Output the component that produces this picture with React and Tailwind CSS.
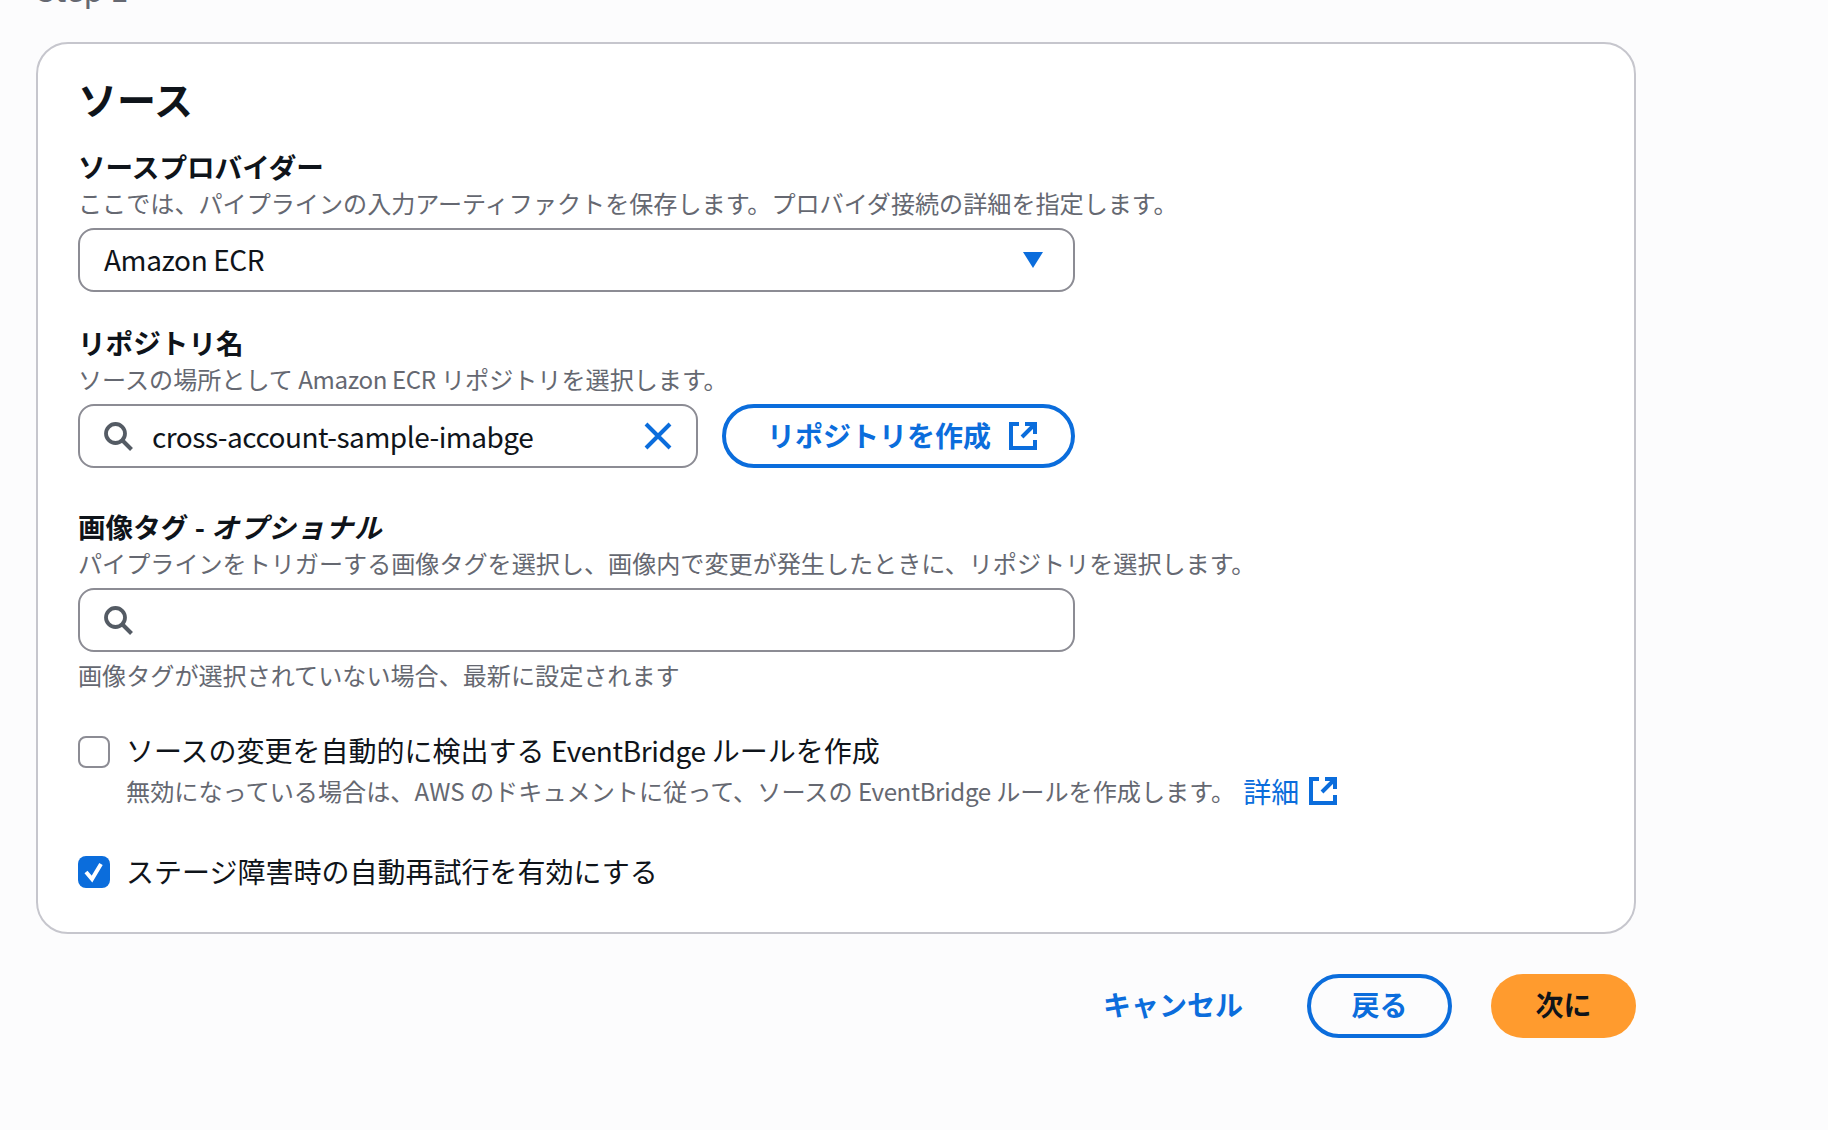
import React from "react";

const FONT = "font-['Noto_Sans_CJK_JP','Noto_Sans',sans-serif]";

function SearchIcon() {
  return (
    <svg width="32" height="32" viewBox="0 0 32 32" fill="none" className="shrink-0">
      <circle cx="13.5" cy="13.5" r="9.5" stroke="#545b64" strokeWidth="3.8" />
      <path d="M20.5 20.5 L29.5 29.5" stroke="#545b64" strokeWidth="4" />
    </svg>
  );
}

function ExternalIcon() {
  return (
    <svg width="28" height="28" viewBox="0 0 28 28" fill="none" className="shrink-0">
      <path d="M10 2 H2 V26 H26 V18" stroke="#0b6ddc" strokeWidth="4" />
      <path d="M16 2 H26 V12 M26 2 L13 15" stroke="#0b6ddc" strokeWidth="4" />
    </svg>
  );
}

function Label({ children }) {
  return <div className="text-[27.6px] leading-[37px] font-bold text-[#0f141a]">{children}</div>;
}

function Desc({ children }) {
  return <div className="text-[24.1px] leading-[36px] text-[#656871] whitespace-nowrap">{children}</div>;
}

export default function App() {
  return (
    <div className={`${FONT} w-[1828px] h-[1130px] overflow-hidden bg-[#fcfcfd] pl-[36px]`}>
      <div className="h-[42px] -mt-[28px] text-[32px] leading-[32px] text-[#656871]">Step 1</div>
      <div className="w-[1600px] h-[892px] mt-[28px] bg-white border-2 border-[#c6c6cd] rounded-[32px] pl-[40px] pt-[28px]">
        <h2 className="text-[39px] leading-[52px] font-bold text-[#0f141a]">ソース</h2>
        <div className="mt-[24px]">
          <Label>ソースプロバイダー</Label>
          <Desc>ここでは、パイプラインの入力アーティファクトを保存します。プロバイダ接続の詳細を指定します。</Desc>
        </div>
        <div className="mt-[7px] w-[997px] h-[64px] border-2 border-[#8c8c94] rounded-[16px] flex items-center justify-between pl-[24px] pr-[29px]">
          <span className="text-[28px] tracking-[-0.4px] text-[#0f141a] pb-[2px]">Amazon ECR</span>
          <svg width="22" height="18" viewBox="0 0 22 18"><path d="M1 1 H21 L11 17 Z" fill="#0b6ddc" /></svg>
        </div>

        <div className="mt-[32px]">
          <Label>リポジトリ名</Label>
          <Desc>ソースの場所として <span className="tracking-[-0.4px]">Amazon ECR</span> リポジトリを選択します。</Desc>
        </div>
        <div className="mt-[7px] flex gap-[24px] w-[997px]">
          <div className="w-[620px] h-[64px] border-2 border-[#8c8c94] rounded-[16px] flex items-center pl-[22px] pr-[23px]">
            <SearchIcon />
            <span className="ml-[18px] text-[28px] tracking-[-0.5px] text-[#0f141a] flex-1">cross-account-sample-imabge</span>
            <svg width="30" height="30" viewBox="0 0 30 30" fill="none"><path d="M3 3 L27 27 M27 3 L3 27" stroke="#0b6ddc" strokeWidth="4" /></svg>
          </div>
          <div className="w-[353px] h-[64px] border-4 border-[#0b6ddc] rounded-full flex items-center justify-center gap-[18px] pl-[7px]">
            <span className="text-[28px] font-bold text-[#0b6ddc] pb-[2px]">リポジトリを作成</span>
            <ExternalIcon />
          </div>
        </div>

        <div className="mt-[40px]">
          <Label>画像タグ - <em className="tracking-[1px]">オプショナル</em></Label>
          <Desc>パイプラインをトリガーする画像タグを選択し、画像内で変更が発生したときに、リポジトリを選択します。</Desc>
        </div>
        <div className="mt-[7px] w-[997px] h-[64px] border-2 border-[#8c8c94] rounded-[16px] flex items-center pl-[22px]">
          <SearchIcon />
        </div>
        <Desc><span className="block mt-[5px]">画像タグが選択されていない場合、最新に設定されます</span></Desc>

        <div className="mt-[35px] flex gap-[16px]">
          <div className="mt-[8px] w-[32px] h-[32px] border-2 border-[#8c8c94] rounded-[8px] bg-white shrink-0" />
          <div>
            <div className="text-[28px] leading-[45px] text-[#0f141a]">ソースの変更を自動的に検出する <span className="tracking-[-0.4px]">EventBridge</span> ルールを作成</div>
            <div className="flex items-center whitespace-nowrap">
              <span className="text-[24.15px] leading-[36px] text-[#656871]">無効になっている場合は、AWS のドキュメントに従って、ソースの <span className="tracking-[-0.4px]">EventBridge</span> ルールを作成します。</span>
              <span className="ml-[8px] text-[28px] leading-[36px] text-[#0b6ddc]">詳細</span>
              <span className="ml-[10px]"><ExternalIcon /></span>
            </div>
          </div>
        </div>

        <div className="mt-[40px] flex gap-[16px] items-center">
          <div className="w-[32px] h-[32px] rounded-[8px] bg-[#0b6ddc] flex items-center justify-center shrink-0">
            <svg width="24" height="24" viewBox="0 0 24 24" fill="none"><path d="M4 12 L10 19 L19 4" stroke="#fff" strokeWidth="4" /></svg>
          </div>
          <span className="text-[28px] leading-[44px] text-[#0f141a] pb-[2px]">ステージ障害時の自動再試行を有効にする</span>
        </div>
      </div>

      <div className="w-[1600px] mt-[40px] flex items-center justify-end">
        <span className="text-[28px] font-bold text-[#0b6ddc] mr-[64px] pb-[4px]">キャンセル</span>
        <div className="w-[145px] h-[64px] border-4 border-[#0b6ddc] rounded-full flex items-center justify-center text-[28px] font-bold text-[#0b6ddc] pb-[4px]">戻る</div>
        <div className="ml-[39px] w-[145px] h-[64px] bg-[#ff9b2e] rounded-full flex items-center justify-center text-[28px] font-bold text-[#0f141a] pb-[4px]">次に</div>
      </div>
    </div>
  );
}
